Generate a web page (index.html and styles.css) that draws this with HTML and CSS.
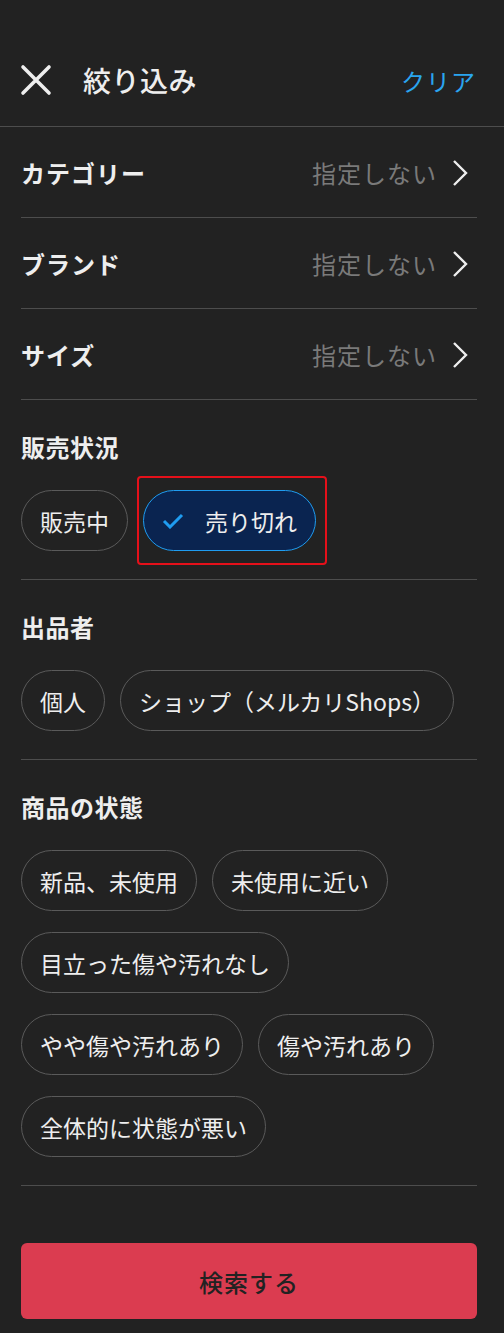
FILE: index.html
```html
<!DOCTYPE html>
<html lang="ja">
<head>
    <meta charset="UTF-8">
    <meta name="viewport" content="width=device-width, initial-scale=1.0">
    <title>絞り込み</title>
    <link rel="stylesheet" href="styles.css">
</head>
<body>
  <header class="top-bar">
    <button class="close-btn" aria-label="閉じる">
      <svg width="32" height="32" viewBox="0 0 32 32"><path d="M3 3 L29 29 M29 3 L3 29" stroke="#eee" stroke-width="3.6" stroke-linecap="round"/></svg>
    </button>
    <h1 class="title">絞り込み</h1>
    <a class="clear" href="#">クリア</a>
  </header>

  <main class="filters">
    <div class="row">
      <span class="row-label">カテゴリー</span>
      <span class="row-value">指定しない
        <svg width="18" height="28" viewBox="0 0 18 28"><path d="M3 2 L15 14 L3 26" fill="none" stroke="#eee" stroke-width="2.4"/></svg>
      </span>
    </div>
    <div class="row">
      <span class="row-label">ブランド</span>
      <span class="row-value">指定しない
        <svg width="18" height="28" viewBox="0 0 18 28"><path d="M3 2 L15 14 L3 26" fill="none" stroke="#eee" stroke-width="2.4"/></svg>
      </span>
    </div>
    <div class="row">
      <span class="row-label">サイズ</span>
      <span class="row-value">指定しない
        <svg width="18" height="28" viewBox="0 0 18 28"><path d="M3 2 L15 14 L3 26" fill="none" stroke="#eee" stroke-width="2.4"/></svg>
      </span>
    </div>

    <section class="group">
      <h2>販売状況</h2>
      <div class="chips">
        <span class="chip">販売中</span>
        <span class="chip selected highlight">
          <svg width="22" height="16" viewBox="0 0 22 16"><path d="M2 8 L8 14 L20 2" fill="none" stroke="#1f9cf0" stroke-width="3"/></svg>
          売り切れ
        </span>
      </div>
    </section>

    <section class="group">
      <h2>出品者</h2>
      <div class="chips">
        <span class="chip">個人</span>
        <span class="chip">ショップ（メルカリShops）</span>
      </div>
    </section>

    <section class="group">
      <h2>商品の状態</h2>
      <div class="chips">
        <span class="chip">新品、未使用</span>
        <span class="chip">未使用に近い</span>
        <span class="chip">目立った傷や汚れなし</span>
        <span class="chip">やや傷や汚れあり</span>
        <span class="chip">傷や汚れあり</span>
        <span class="chip">全体的に状態が悪い</span>
      </div>
    </section>

    <button class="search-btn">検索する</button>
  </main>
</body>
</html>
```

FILE: styles.css
```css
* {
    margin: 0;
    padding: 0;
    box-sizing: border-box;
    font-family: "Noto Sans CJK JP", "Noto Sans", sans-serif;
}
body {
    background: #222;
    color: #eee;
    width: 504px;
    min-height: 1333px;
}
.top-bar {
    display: flex;
    align-items: center;
    height: 127px;
    padding: 34px 28px 0 20px;
    border-bottom: 1px solid #4d4d4d;
}
.close-btn {
    background: none;
    border: none;
    width: 32px;
    height: 32px;
    display: flex;
}
.title {
    font-size: 28px;
    font-weight: 500;
    margin-left: 31px;
    flex: 1;
    letter-spacing: 0.5px;
}
.clear {
    color: #2aa5f0;
    font-size: 24px;
    text-decoration: none;
    letter-spacing: 1px;
}
.filters {
    padding: 0 27px 0 21px;
}
.row {
    display: flex;
    align-items: center;
    justify-content: space-between;
    height: 91px;
    border-bottom: 1px solid #4d4d4d;
    padding-top: 1px;
}
.row-label {
    font-size: 24px;
    font-weight: 700;
    letter-spacing: 1px;
}
.row-value {
    display: flex;
    align-items: center;
    gap: 14px;
    color: #7a7a7a;
    font-size: 24px;
    letter-spacing: 1px;
}
.row-value svg {
    margin-right: 8px;
}
.group {
    padding: 33px 0 28px;
    border-bottom: 1px solid #4d4d4d;
}
.group h2 {
    font-size: 24px;
    font-weight: 700;
    line-height: 28px;
    margin-bottom: 29px;
    letter-spacing: 0.5px;
}
.chips {
    display: flex;
    flex-wrap: wrap;
    gap: 21px 15px;
}
.chip {
    display: inline-flex;
    align-items: center;
    height: 61px;
    padding: 0 18px;
    border: 1.5px solid #5a5a5a;
    border-radius: 31px;
    font-size: 23px;
    color: #eee;
}
.chip.selected {
    background: #0a2450;
    border-color: #1f9cf0;
    padding: 0 18px 0 18px;
    gap: 21px;
}
.chip.highlight {
    position: relative;
}
.chip.highlight::after {
    content: "";
    position: absolute;
    top: -15px;
    bottom: -15px;
    left: -7px;
    right: -12px;
    border: 2px solid #e5101a;
    border-radius: 4px;
}
.search-btn {
    display: block;
    width: 100%;
    height: 76px;
    margin-top: 57px;
    background: #db3c50;
    border: none;
    border-radius: 6px;
    color: #222;
    font-size: 24px;
    font-weight: 500;
    letter-spacing: 1px;
}
```
